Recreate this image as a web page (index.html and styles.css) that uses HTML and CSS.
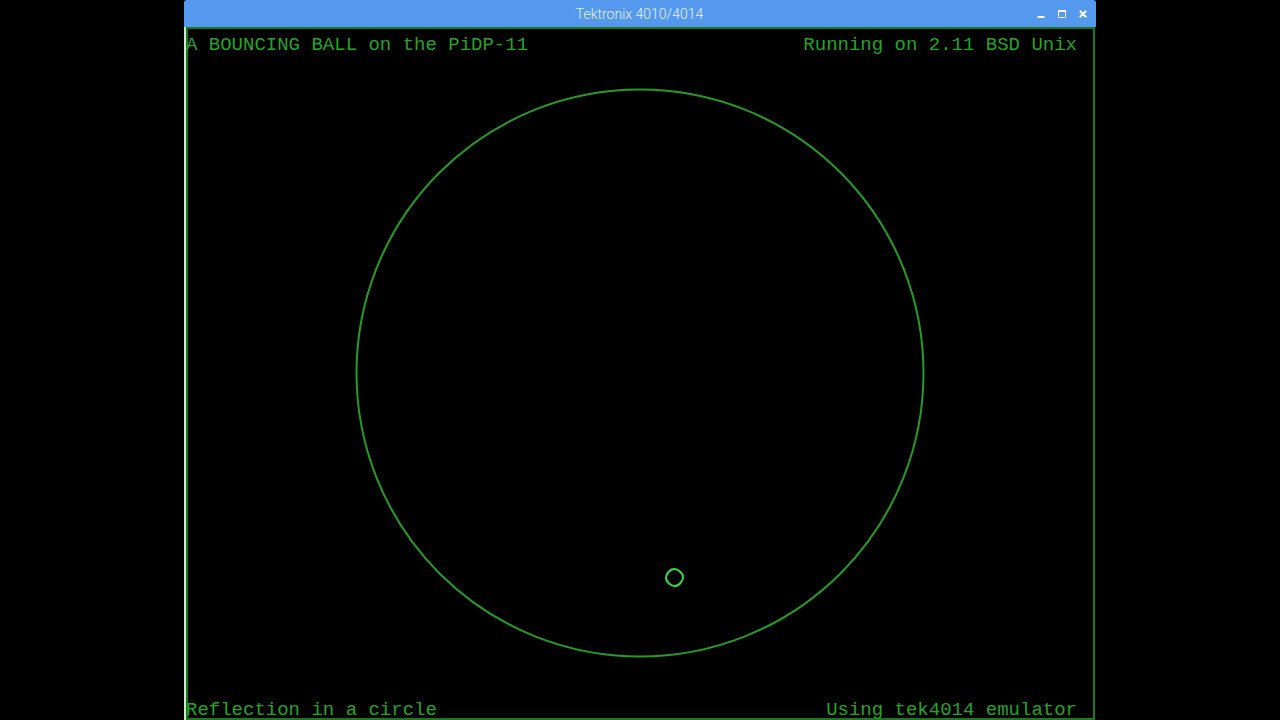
FILE: index.html
```html
<!DOCTYPE html>
<html lang="en">
<head>
<meta charset="utf-8">
<title>Tektronix 4010/4014</title>
<link rel="stylesheet" href="styles.css">
</head>
<body>
<main class="window">
  <header class="titlebar">
    <h1 class="title">Tektronix 4010/4014</h1>
    <div class="controls">
      <button class="control" type="button" aria-label="Minimize"><svg viewBox="0 0 10 10"><path d="M1.5 8H8.5" stroke-width="2"/></svg></button>
      <button class="control" type="button" aria-label="Maximize"><svg viewBox="0 0 10 10"><path d="M1.5 1.5V8.5H8.500V1.5"/><path d="M1 2H9" stroke-width="2"/></svg></button>
      <button class="control" type="button" aria-label="Close"><svg viewBox="0 0 10 10"><path d="M1.8 1.8L8.2 8.2M8.2 1.8L1.8 8.2" stroke-width="2"/></svg></button>
    </div>
  </header>
  <section class="screen">
    <svg class="plot" viewBox="0 0 909 693" role="img" aria-label="Ball inside a circle">
      <circle class="wall" cx="454" cy="346" r="283.5"/>
      <path class="ball" d="M488.500 542Q491 542 494 544.500T497 550.500Q497 553 494.500 556T488.500 559Q486 559 483 556.500T480 550.500Q480 548 482.500 545T488.500 542Z"/>
    </svg>
    <div class="line line-top">
      <span>A BOUNCING BALL on the PiDP-11</span>
      <span>Running on 2.11 BSD Unix</span>
    </div>
    <div class="line line-bottom">
      <span>Reflection in a circle</span>
      <span>Using tek4014 emulator</span>
    </div>
  </section>
</main>
</body>
</html>
```
FILE: styles.css
```css
* {
  box-sizing: border-box;
}

body {
  margin: 0;
  background: #000;
}

.window {
  display: flex;
  flex-direction: column;
  width: 71.25%;
  height: 100vh;
  margin: 0 auto;
}

.titlebar {
  display: grid;
  grid-template-columns: 1fr auto 1fr;
  align-items: center;
  height: 27px;
  padding: 1px 8px 0 7px;
  border-radius: 3px 3px 0 0;
  background: #5599ee;
}

.title {
  grid-column: 2;
  margin: 0;
  font: 300 14px/20px Roboto, sans-serif;
  color: #e4f1ff;
}

.controls {
  display: flex;
  justify-content: flex-end;
  gap: 11px;
}

.control {
  display: block;
  width: 10px;
  height: 10px;
  padding: 0;
  border: 0;
  background: none;
}

.control svg {
  display: block;
  fill: none;
  stroke: #fff;
}

.screen {
  display: grid;
  grid-template-rows: auto 1fr auto;
  flex: 1;
  min-height: 0;
  margin-right: 1px;
  border-left: 2px solid #cdeacd;
  box-shadow: inset 0 0 0 2px #187a1c;
}

.plot {
  grid-area: 1 / 1 / 4 / 2;
  width: 100%;
  height: 100%;
  min-height: 0;
  fill: none;
}

.wall {
  stroke: #279a2a;
  stroke-width: 2;
}

.ball {
  stroke: #3ed83e;
  stroke-width: 2;
}

.line {
  display: flex;
  justify-content: space-between;
  padding-right: 18px;
  font: 19px/20px "Liberation Mono", monospace;
  color: #27a22a;
}

.line-top {
  grid-area: 1 / 1;
  padding-top: 8px;
}

.line-bottom {
  grid-area: 3 / 1;
}
```
